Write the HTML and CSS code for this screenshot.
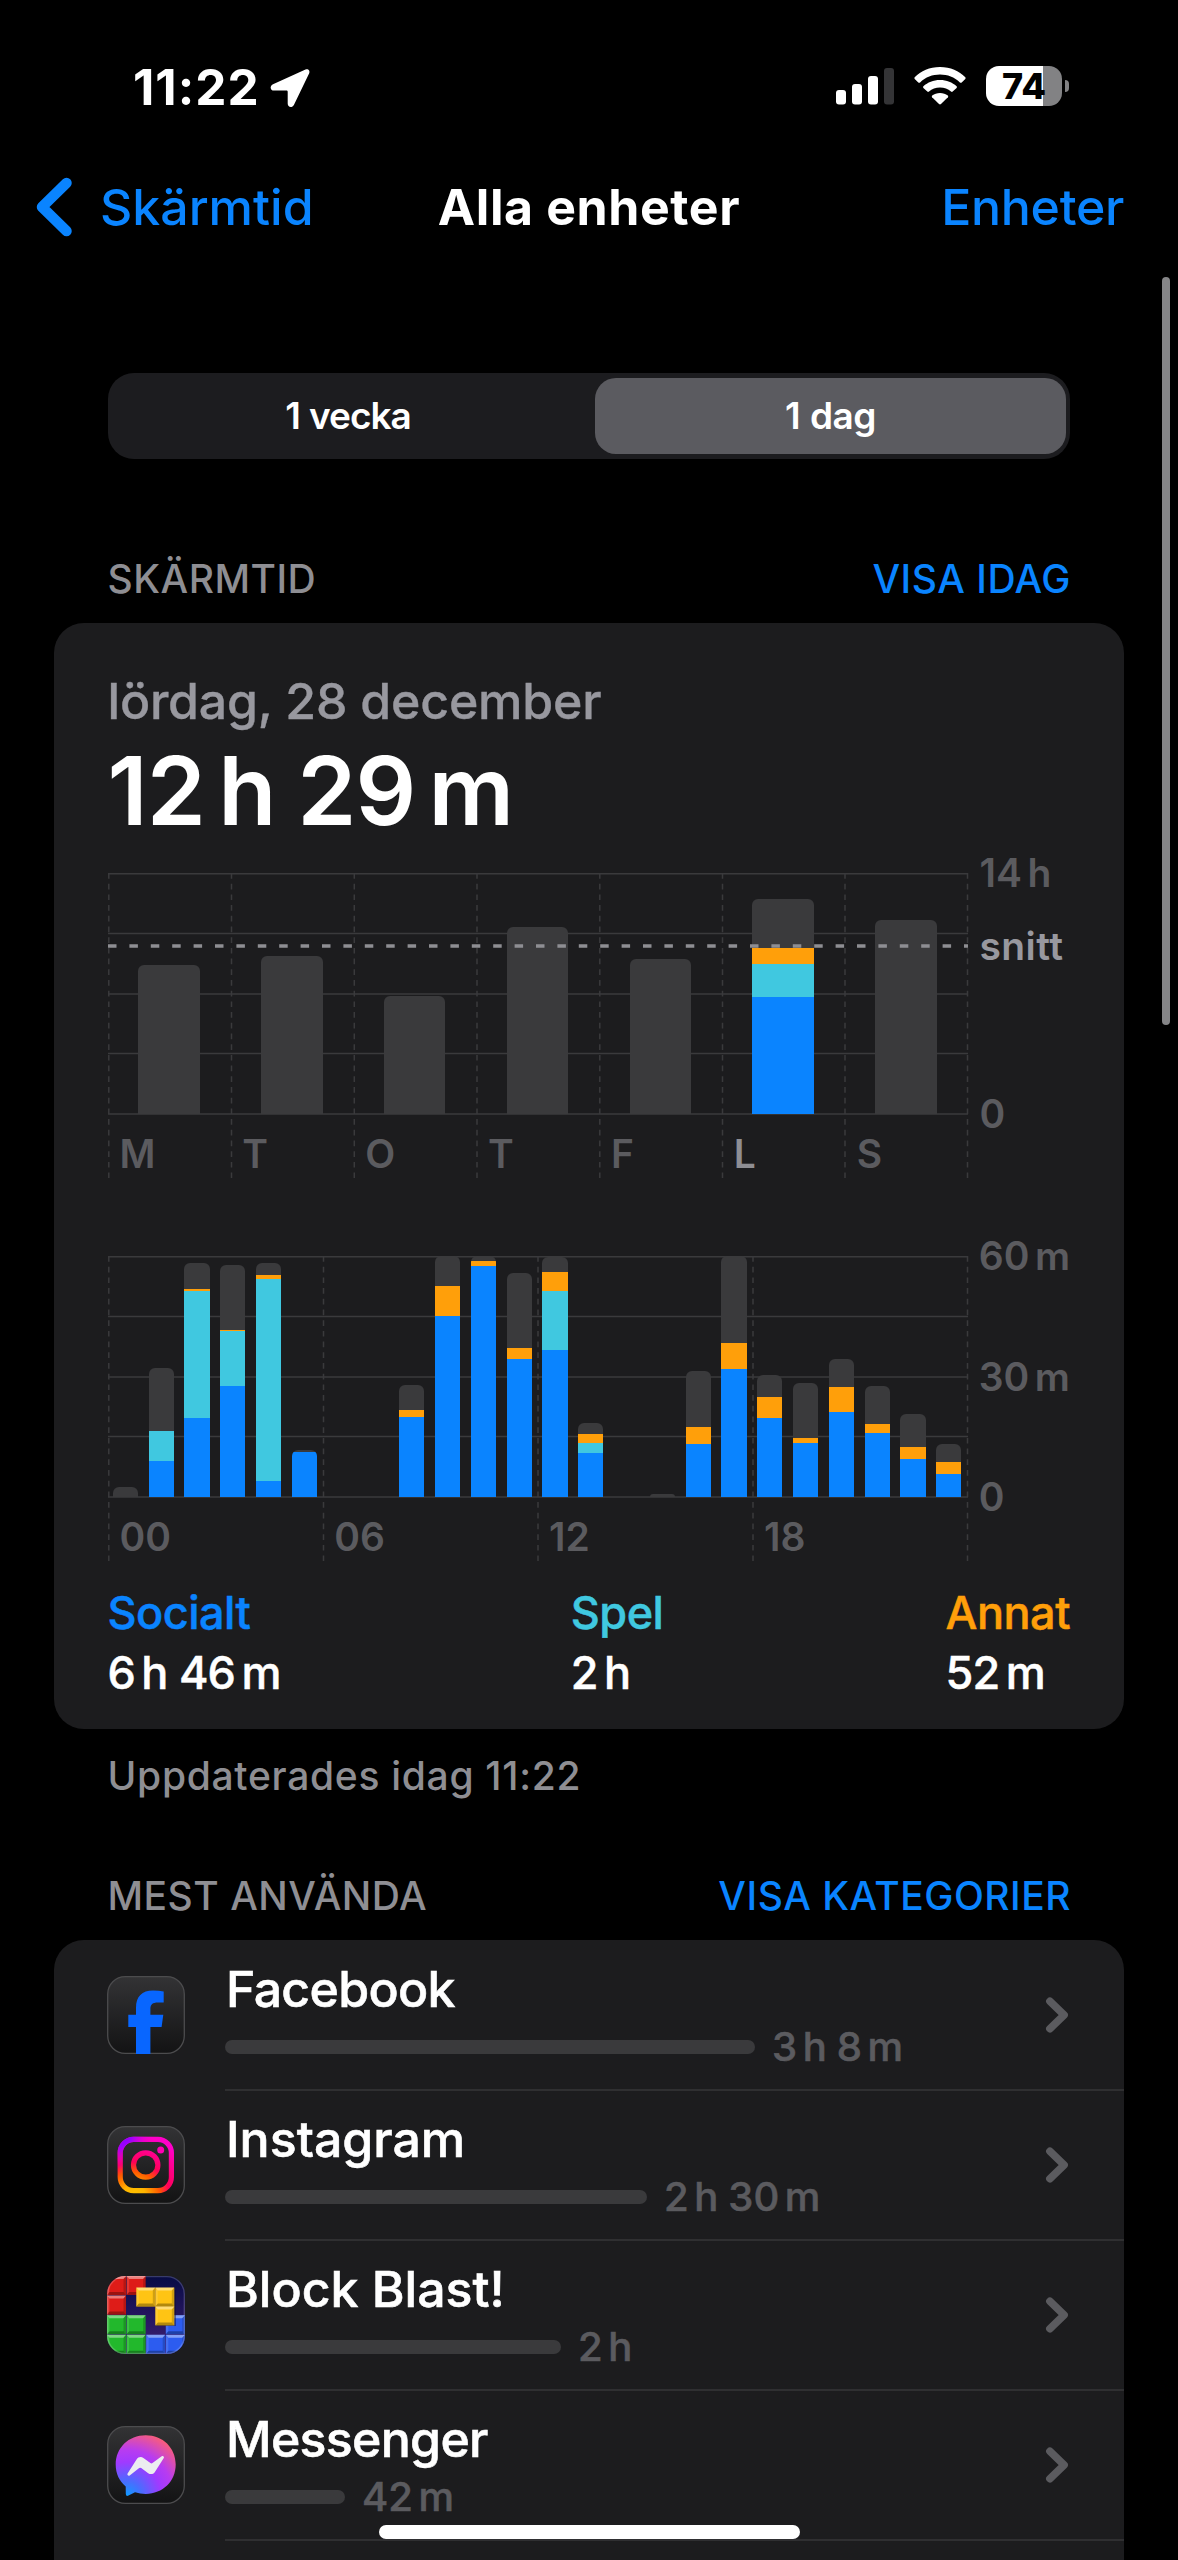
FILE: index.html
```html
<!DOCTYPE html>
<html lang="sv">
<head>
<meta charset="utf-8">
<title>Skärmtid</title>
<link rel="stylesheet" href="styles.css">
</head>
<body>
<div class="screen">
  <header class="status">
    <div class="status-left">
      <span class="clock">11:22</span>
      <svg class="location" width="42" height="42" viewBox="0 0 42 42"><path d="M36.5 2.6 4 17.2C.4 19 1.2 23.600 5 23.600H17.300C18.200 23.600 18.700 24.100 18.700 25V36.600C18.700 40.600 23.200 41.400 25 37.700L40.200 6.200C41.300 3.600 39 1.400 36.500 2.600Z" fill="#fff"/></svg>
    </div>
    <div class="status-right">
      <svg width="58" height="37" viewBox="0 0 58 37"><g fill="#fff"><rect y="22" width="10" height="14.500" rx="3"/><rect x="16" y="16" width="10" height="20.500" rx="3"/><rect x="32" y="8" width="10" height="28.500" rx="3"/></g><rect x="48" width="10" height="36.500" rx="3" fill="#343436"/></svg>
      <svg width="52" height="38" viewBox="0 0 52 38"><g fill="#fff"><path d="M26 0C36.500 0 45 4 51.300 10.200Q52 11 51.300 11.900L47.700 15.400Q46.800 16.200 45.900 15.400C40.500 10.300 33.500 7.600 26 7.600S11.500 10.300 6.100 15.400Q5.200 16.200 4.300 15.400L.7 11.900Q0 11 .7 10.200C7 4 15.500 0 26 0Z"/><path d="M26 13C32.700 13 38.300 15.400 42.600 19.200Q43.400 20 42.600 20.900L38.700 24.600Q37.900 25.400 37 24.600C34 22 30.300 20.600 26 20.600S18 22 15 24.600Q14.100 25.400 13.300 24.600L9.400 20.900Q8.600 20 9.400 19.200C13.700 15.400 19.300 13 26 13Z"/><path d="M26 26C29 26 31.700 27 33.800 28.500Q34.700 29.300 33.900 30.200L27 37.100Q26 38 25 37.100L18.100 30.200Q17.300 29.300 18.200 28.500C20.300 27 23 26 26 26Z"/></g></svg>
      <div class="battery"><span class="battery-level">74</span></div>
    </div>
  </header>

  <nav class="nav">
    <a class="back"><svg width="38" height="60" viewBox="0 0 38 60"><path d="M31.500 6 7 30 31.500 54" fill="none" stroke="#0a84ff" stroke-width="10.500" stroke-linecap="round" stroke-linejoin="round"/></svg><span>Skärmtid</span></a>
    <h1 class="nav-title">Alla enheter</h1>
    <a class="nav-action">Enheter</a>
  </nav>

  <main class="content">
    <div class="segmented"><span class="segment">1 vecka</span><span class="segment selected">1 dag</span></div>

    <div class="section-head"><h2>SKÄRMTID</h2><a>VISA IDAG</a></div>
    <section class="card summary">
      <p class="date">lördag, 28 december</p>
      <p class="total">12<i class="n"></i>h<i class="w"></i>29<i class="n"></i>m</p>

      <div class="chart">
        <div class="plot-area">
          <svg class="grid" width="861" height="306" viewBox="0 0 861 306">
            <g stroke="#3a3a3c" stroke-width="1.500"><path d="M0 .8H860M0 60.500H860M0 121H860M0 180.500H860M0 241H860"/><path stroke-dasharray="5.700 5" d="M.8 0V305M123.500 0V305M246.300 0V305M369 0V305M491.800 0V305M614.500 0V305M737 0V305M859.500 0V305"/></g>
          </svg>
          <div class="bars week">
            <div class="bar"><b class="rest" style="height:149.500px"></b></div>
            <div class="bar"><b class="rest" style="height:158px"></b></div>
            <div class="bar"><b class="rest" style="height:118px"></b></div>
            <div class="bar"><b class="rest" style="height:187.500px"></b></div>
            <div class="bar"><b class="rest" style="height:155px"></b></div>
            <div class="bar"><b class="rest" style="height:49px"></b><b class="other" style="height:15.500px"></b><b class="games" style="height:33.500px"></b><b class="social" style="height:117px"></b></div>
            <div class="bar"><b class="rest" style="height:194px"></b></div>
          </div>
          <svg class="average" width="861" height="4" viewBox="0 0 861 4"><path d="M0 2H860" stroke="#8e8e93" stroke-width="3.600" stroke-dasharray="8.500 12.900"/></svg>
          <div class="x-axis days"><span>M</span><span>T</span><span>O</span><span>T</span><span>F</span><span class="today">L</span><span>S</span></div>
        </div>
        <div class="y-axis"><span>14<i class="n"></i>h</span><span class="avg-label">snitt</span><span>0</span></div>
      </div>

      <div class="chart hourly">
        <div class="plot-area">
          <svg class="grid" width="861" height="306" viewBox="0 0 861 306">
            <g stroke="#3a3a3c" stroke-width="1.500"><path d="M0 .8H860M0 60.500H860M0 121H860M0 180.500H860M0 241H860"/><path stroke-dasharray="5.700 5" d="M.8 0V305M215.500 0V305M430 0V305M645 0V305M859.500 0V305"/></g>
          </svg>
          <div class="bars hours">
            <div class="bar"><b class="rest" style="height:10px"></b></div>
            <div class="bar"><b class="rest" style="height:62.300px"></b><b class="games" style="height:30.700px"></b><b class="social" style="height:35.700px"></b></div>
            <div class="bar"><b class="rest" style="height:26.500px"></b><b class="other" style="height:1.400px"></b><b class="games" style="height:127px"></b><b class="social" style="height:79.300px"></b></div>
            <div class="bar"><b class="rest" style="height:64.700px"></b><b class="other" style="height:1.400px"></b><b class="games" style="height:55px"></b><b class="social" style="height:111px"></b></div>
            <div class="bar"><b class="rest" style="height:11.700px"></b><b class="other" style="height:4.700px"></b><b class="games" style="height:201.700px"></b><b class="social" style="height:16px"></b></div>
            <div class="bar"><b class="rest" style="height:2.300px"></b><b class="social" style="height:44.700px"></b></div>
            <div class="bar"></div>
            <div class="bar"></div>
            <div class="bar"><b class="rest" style="height:25.300px"></b><b class="other" style="height:6.300px"></b><b class="social" style="height:80.300px"></b></div>
            <div class="bar"><b class="rest" style="height:30px"></b><b class="other" style="height:29.300px"></b><b class="social" style="height:181.300px"></b></div>
            <div class="bar"><b class="rest" style="height:5px"></b><b class="other" style="height:4.300px"></b><b class="social" style="height:231.300px"></b></div>
            <div class="bar"><b class="rest" style="height:74.700px"></b><b class="other" style="height:11.700px"></b><b class="social" style="height:137.700px"></b></div>
            <div class="bar"><b class="rest" style="height:15.300px"></b><b class="other" style="height:19.300px"></b><b class="games" style="height:58.300px"></b><b class="social" style="height:147.300px"></b></div>
            <div class="bar"><b class="rest" style="height:10.700px"></b><b class="other" style="height:9.700px"></b><b class="games" style="height:9.700px"></b><b class="social" style="height:44px"></b></div>
            <div class="bar"></div>
            <div class="bar"><b class="rest" style="height:2.700px"></b></div>
            <div class="bar"><b class="rest" style="height:56px"></b><b class="other" style="height:17.300px"></b><b class="social" style="height:52.700px"></b></div>
            <div class="bar"><b class="rest" style="height:87px"></b><b class="other" style="height:26px"></b><b class="social" style="height:127.700px"></b></div>
            <div class="bar"><b class="rest" style="height:22px"></b><b class="other" style="height:21.300px"></b><b class="social" style="height:78.700px"></b></div>
            <div class="bar"><b class="rest" style="height:54.700px"></b><b class="other" style="height:5.300px"></b><b class="social" style="height:53.700px"></b></div>
            <div class="bar"><b class="rest" style="height:28.300px"></b><b class="other" style="height:25.300px"></b><b class="social" style="height:84.700px"></b></div>
            <div class="bar"><b class="rest" style="height:38px"></b><b class="other" style="height:8.700px"></b><b class="social" style="height:64.300px"></b></div>
            <div class="bar"><b class="rest" style="height:33.300px"></b><b class="other" style="height:11.700px"></b><b class="social" style="height:38.300px"></b></div>
            <div class="bar"><b class="rest" style="height:18px"></b><b class="other" style="height:11.300px"></b><b class="social" style="height:23.300px"></b></div>
          </div>
          <div class="x-axis quarters"><span>00</span><span>06</span><span>12</span><span>18</span></div>
        </div>
        <div class="y-axis"><span>60<i class="n"></i>m</span><span>30<i class="n"></i>m</span><span>0</span></div>
      </div>

      <dl class="legend">
        <div><dt class="c-social">Socialt</dt><dd>6<i class="n"></i>h<i class="w"></i>46<i class="n"></i>m</dd></div>
        <div class="legend-mid"><dt class="c-games">Spel</dt><dd>2<i class="n"></i>h</dd></div>
        <div><dt class="c-other">Annat</dt><dd>52<i class="n"></i>m</dd></div>
      </dl>
    </section>
    <p class="updated">Uppdaterades idag 11:22</p>

    <div class="section-head apps-head"><h2>MEST ANVÄNDA</h2><a>VISA KATEGORIER</a></div>
    <section class="card apps">
      <div class="app">
        <svg class="icon" viewBox="0 0 78 78">
          <defs><linearGradient id="dark" x2="0" y2="1"><stop offset="0" stop-color="#333335"/><stop offset="1" stop-color="#131314"/></linearGradient></defs>
          <rect x=".7" y=".7" width="76.600" height="76.600" rx="17.500" fill="url(#dark)" stroke="#4c4c4e" stroke-width="1.300"/>
          <path d="M29 78V50.900H21.300V38.700H29V32C29 20.500 35 14.600 46 14.600Q52 14.600 56.700 15.400V26.500H51C45.500 26.500 43.400 28.500 43.400 33V38.700H56.300L54.600 50.900H43.400V78Z" fill="#0866ff"/>
        </svg>
        <div class="app-body"><h3 class="tight">Facebook</h3><div class="usage"><b style="width:530px"></b><span>3<i class="n"></i>h<i class="w"></i>8<i class="n"></i>m</span></div></div>
        <svg class="chevron" viewBox="0 0 24 38"><path d="M4.500 4.500 19.500 19 4.500 33.500"/></svg>
      </div>
      <div class="app">
        <svg class="icon" viewBox="0 0 78 78">
          <defs>
            <radialGradient id="ig" gradientUnits="userSpaceOnUse" cx="27" cy="72" r="62"><stop offset="0" stop-color="#ffc800"/><stop offset=".2" stop-color="#ffb400"/><stop offset=".42" stop-color="#ff5a00"/><stop offset=".58" stop-color="#ff0058"/><stop offset="1" stop-color="#ff00c8"/></radialGradient>
            <radialGradient id="igv" gradientUnits="userSpaceOnUse" cx="12" cy="8" r="36"><stop offset="0" stop-color="#7a00ff"/><stop offset=".35" stop-color="#9a00ff"/><stop offset="1" stop-color="#ff00d0" stop-opacity="0"/></radialGradient>
          </defs>
          <rect x=".7" y=".7" width="76.600" height="76.600" rx="17.500" fill="url(#dark)" stroke="#4c4c4e" stroke-width="1.300"/>
          <g fill="none" stroke-width="5.200" stroke="url(#ig)"><rect x="13.200" y="13.400" width="51.200" height="51.200" rx="13.500"/><circle cx="38.700" cy="39" r="12.200"/></g>
          <rect x="13.200" y="13.400" width="51.200" height="51.200" rx="13.500" fill="none" stroke-width="5.200" stroke="url(#igv)"/>
          <circle cx="53.700" cy="24" r="3.500" fill="#ff00b4"/>
        </svg>
        <div class="app-body"><h3>Instagram</h3><div class="usage"><b style="width:422px"></b><span>2<i class="n"></i>h<i class="w"></i>30<i class="n"></i>m</span></div></div>
        <svg class="chevron" viewBox="0 0 24 38"><path d="M4.500 4.500 19.500 19 4.500 33.500"/></svg>
      </div>
      <div class="app">
        <svg class="icon" viewBox="0 0 78 78">
          <defs>
            <clipPath id="clip"><rect width="78" height="78" rx="18"/></clipPath>
            <linearGradient id="night" x2="0" y2="1"><stop offset="0" stop-color="#070b44"/><stop offset="1" stop-color="#402078"/></linearGradient>
            <g id="tile"><rect width="19" height="19"/><path d="M0 0H19L16.500 3H2.500Z" fill="#fff" fill-opacity=".42"/><path d="M0 0 2.500 3V16L0 19Z" fill="#fff" fill-opacity=".12"/><path d="M19 0V19L16.500 16V3Z" fill="#000" fill-opacity=".18"/><path d="M0 19 2.500 16H16.500L19 19Z" fill="#000" fill-opacity=".3"/></g>
          </defs>
          <g clip-path="url(#clip)">
            <rect width="78" height="78" fill="url(#night)"/>
            <g fill="#de1c18"><use href="#tile"/><use href="#tile" x="19.600"/><use href="#tile" y="19.600"/></g>
            <g fill="#22b82c"><use href="#tile" y="39.200"/><use href="#tile" x="19.600" y="39.200"/><use href="#tile" y="58.800"/><use href="#tile" x="19.600" y="58.800"/></g>
            <g fill="#2c5cf0"><use href="#tile" x="39.200" y="58.800"/><use href="#tile" x="58.800" y="58.800"/><use href="#tile" x="58.800" y="39.200"/></g>
            <path d="M29 30H50V50H69V14H66Z" fill="#0a0830" fill-opacity=".45"/>
            <g fill="#ffc414"><use href="#tile" x="29.300" y="11.600"/><use href="#tile" x="48.300" y="11.600"/><use href="#tile" x="48.300" y="30.400"/></g>
          </g>
          <rect x=".7" y=".7" width="76.600" height="76.600" rx="17.500" fill="none" stroke="#fff" stroke-opacity=".2" stroke-width="1.300"/>
        </svg>
        <div class="app-body"><h3>Block Blast!</h3><div class="usage"><b style="width:336px"></b><span>2<i class="n"></i>h</span></div></div>
        <svg class="chevron" viewBox="0 0 24 38"><path d="M4.500 4.500 19.500 19 4.500 33.500"/></svg>
      </div>
      <div class="app">
        <svg class="icon" viewBox="0 0 78 78">
          <defs><radialGradient id="msg" gradientUnits="userSpaceOnUse" cx="20" cy="70" r="68"><stop offset="0" stop-color="#0e9bff"/><stop offset=".22" stop-color="#4a6cff"/><stop offset=".5" stop-color="#a03aff"/><stop offset=".68" stop-color="#b83cf0"/><stop offset="1" stop-color="#ff6070"/></radialGradient></defs>
          <rect x=".7" y=".7" width="76.600" height="76.600" rx="17.500" fill="url(#dark)" stroke="#4c4c4e" stroke-width="1.300"/>
          <path d="M38.700 9.300C55.800 9.300 68.700 21.800 68.700 38.600S55.800 67.900 38.700 67.900Q33 67.900 28 66.200L21.500 69.600Q19 70.600 18.800 68L18.700 60.500C12.300 55.200 8.700 47.700 8.700 38.600 8.700 21.800 21.600 9.300 38.700 9.300Z" fill="url(#msg)"/>
          <path d="M20.600 47.600 29.700 33.200C31.200 30.900 34.200 30.400 36.400 32L43.400 37.100Q44.500 37.800 45.500 37.100L54.700 30.200C56 29.200 57.600 30.700 56.800 32.100L47.900 45.900C46.400 48.200 43.400 48.800 41.200 47.200L34.200 42.100Q33.200 41.400 32.200 42.100L22.700 49.400C21.500 50.300 19.800 49 20.600 47.600Z" fill="#ececf0"/>
        </svg>
        <div class="app-body"><h3 class="tight">Messenger</h3><div class="usage"><b style="width:120px"></b><span>42<i class="n"></i>m</span></div></div>
        <svg class="chevron" viewBox="0 0 24 38"><path d="M4.500 4.500 19.500 19 4.500 33.500"/></svg>
      </div>
    </section>
  </main>
  <div class="scrollbar"></div>
  <div class="home-indicator"></div>
</div>
</body>
</html>
```
FILE: styles.css
```css
* { box-sizing: border-box; }
body { margin: 0; background: #000; }
h1, h2, h3, p, dl, dd { margin: 0; font-weight: inherit; font-size: inherit; }
.screen {
  position: relative;
  width: 1178px;
  height: 2560px;
  overflow: hidden;
  background: #000;
  color: #fff;
  font-family: Inter, "Liberation Sans", sans-serif;
  white-space: nowrap;
}

/* status bar */
.status { display: flex; justify-content: space-between; height: 150px; padding: 66px 116px 0 133px; }
.status-left { display: flex; height: 42px; align-items: center; }
.clock { width: 136px; font-size: 49.500px; font-weight: 700; line-height: 45px; letter-spacing: 1px; }
.location { margin-top: 2px; }
.status-right { display: flex; height: 40px; align-items: center; gap: 20px; }
.battery {
  position: relative;
  width: 76px;
  height: 40px;
  border-radius: 13px;
  background: linear-gradient(90deg, #fff 57px, #828284 57px);
}
.battery::after { content: ""; position: absolute; left: 79px; top: 14px; width: 4px; height: 12px; border-radius: 0 4px 4px 0; background: #828284; }
.battery-level { display: block; width: 76px; text-align: center; font-size: 36px; font-weight: 800; line-height: 41px; color: #000; }

/* navigation bar */
.nav { display: grid; grid-template-columns: 1fr auto 1fr; align-items: center; height: 114px; padding: 0 35px; font-size: 50px; font-weight: 500; line-height: 60px; color: #0a84ff; }
.back { display: flex; align-items: center; gap: 27px; }
.nav-title { font-weight: 700; letter-spacing: 0.600px; color: #fff; }
.nav-action { margin-right: 19px; text-align: right; letter-spacing: -0.300px; }

.content { padding: 109px 54px 0 53.5px; }
.segmented { display: grid; grid-template-columns: 487px 471px; height: 86px; margin: 0 54px; padding: 5px 4px 5px 0; border-radius: 26px; background: #1c1c1f; }
.segment { padding-right: 6px; border-radius: 21px; text-align: center; font-size: 37px; font-weight: 600; line-height: 76px; letter-spacing: -1px; word-spacing: 1px; }
.selected { padding: 0 0 0 1px; background: #5b5b60; letter-spacing: -0.500px; }

.section-head { display: flex; justify-content: space-between; margin: 97px 54px 21px; font-size: 39px; font-weight: 500; line-height: 46px; letter-spacing: 0.500px; color: #8e8e93; }
.section-head a { margin-right: -1px; color: #0a84ff; }
.apps-head { margin-top: 74px; }
.card { border-radius: 30px; background: #1c1c1e; }

/* daily summary */
.summary { height: 1106px; padding: 48px 54px 0; }
.date { font-size: 50px; font-weight: 500; line-height: 60px; letter-spacing: -0.200px; color: #98989f; -webkit-text-stroke: 0.4px; }
.total { margin-top: 10px; font-size: 95px; font-weight: 600; line-height: 100px; letter-spacing: -1px; }
.n, .w { display: inline-block; }
.n { width: .14em; }
.w { width: .25em; }
.total .w { width: .23em; }

.chart { display: flex; margin-top: 32px; font-size: 39px; font-weight: 600; line-height: 46px; color: #5b5b5f; }
.hourly { margin-top: 78px; }
.plot-area { position: relative; width: 860px; height: 305px; }
.grid { position: absolute; left: 0; top: 0; }
.bars { position: relative; display: grid; height: 241px; }
.week { grid-template-columns: repeat(7, 1fr); }
.hours { grid-template-columns: repeat(24, 1fr); }
.bar { display: flex; flex-direction: column; justify-content: flex-end; align-self: end; border-radius: 6px 6px 0 0; overflow: hidden; }
.week .bar { margin: 0 25%; }
.hours .bar { margin: 0 15%; }
.rest { background: #3a3a3c; }
.other { background: #ff9f0a; }
.games { background: #40c8e0; }
.social { background: #0a84ff; }
.average { position: absolute; left: 0; top: 71px; }
.x-axis { display: grid; margin-top: 17px; }
.x-axis span { padding-left: 12px; }
.days { grid-template-columns: repeat(7, 1fr); }
.quarters { grid-template-columns: repeat(4, 1fr); }
.today { color: #8e8e93; }
.y-axis { position: relative; display: flex; flex-direction: column; justify-content: space-between; height: 287px; margin: -23px 0 0 12px; }
.avg-label { position: absolute; top: 73px; letter-spacing: 0.400px; color: #98989f; }

.legend { display: flex; justify-content: space-between; margin-top: 22px; font-size: 45px; line-height: 60px; font-weight: 500; letter-spacing: -0.500px; -webkit-text-stroke: 0.5px; }
.legend dd { letter-spacing: -0.800px; }
.legend-mid { margin-left: 8px; }
.c-social { color: #0a84ff; }
.c-games { color: #40c8e0; }
.c-other { color: #ff9f0a; }
.updated { margin: 24px 54px 0; font-size: 39px; font-weight: 500; line-height: 46px; letter-spacing: 0.700px; color: #8e8e93; }

/* most used apps */
.apps { height: 660px; padding-top: 1px; border-radius: 30px 30px 0 0; }
.app { display: flex; height: 150px; padding-left: 53.500px; }
.icon { width: 78px; height: 78px; margin-top: 35px; }
.app-body { flex: 1; margin-left: 40px; padding-top: 18px; border-bottom: 2px solid #2f2f31; }
.app-body h3 { padding-left: 1px; font-size: 50px; font-weight: 500; line-height: 60px; -webkit-text-stroke: 0.6px; }
.app-body .tight { letter-spacing: -0.700px; }
.usage { display: flex; align-items: center; gap: 17px; margin-top: 5px; font-size: 40px; font-weight: 500; line-height: 46px; color: #5b5b5f; -webkit-text-stroke: 0.6px; }
.usage b { height: 14px; border-radius: 7px; background: #3a3a3c; }
.chevron { width: 79px; height: 150px; padding: 56px 55px 56px 0; border-bottom: 2px solid #2f2f31; }
.chevron path { fill: none; stroke: #5b5b5f; stroke-width: 8; stroke-linecap: round; stroke-linejoin: round; }

.scrollbar { position: absolute; left: 1162px; top: 277px; width: 8px; height: 748px; border-radius: 4px; background: #858587; }
.home-indicator { position: absolute; left: 379px; top: 2525px; width: 421px; height: 14px; border-radius: 7px; background: #fff; }
```
